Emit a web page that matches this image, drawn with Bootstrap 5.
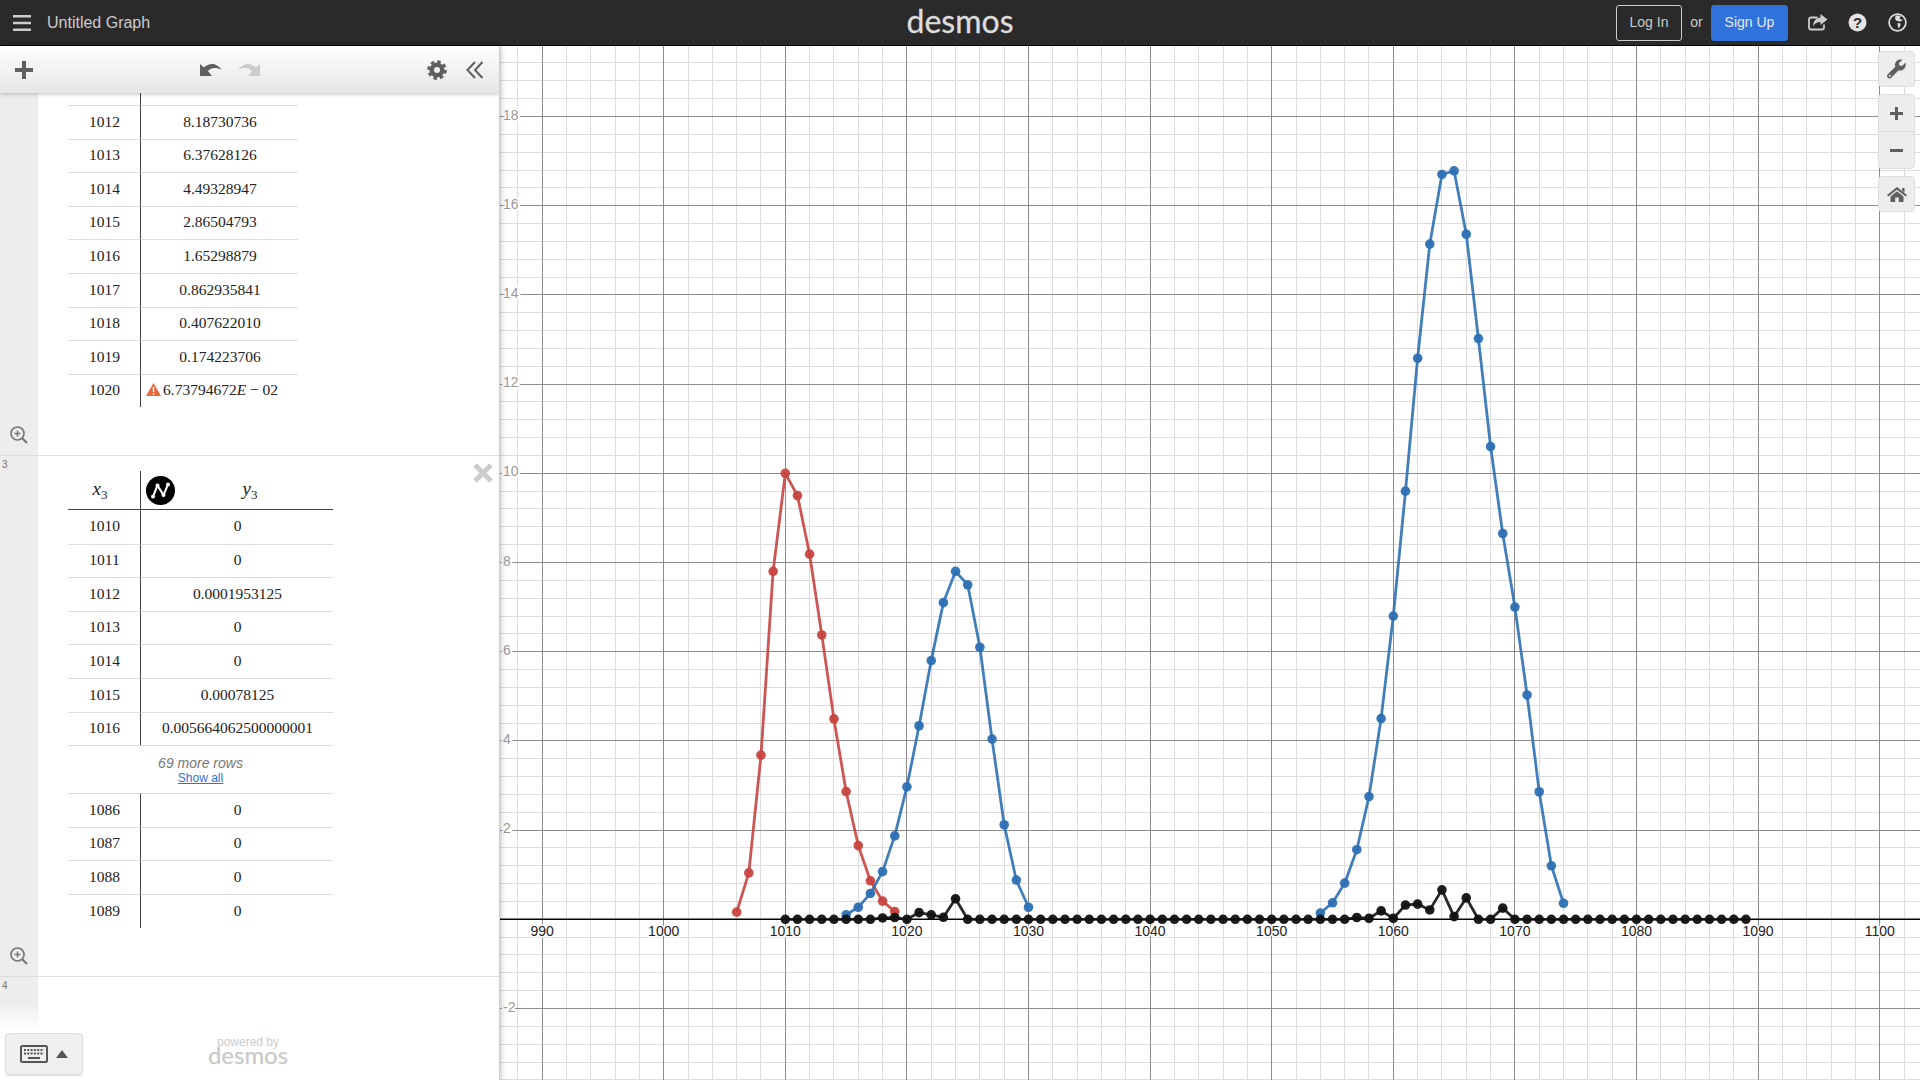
<!DOCTYPE html>
<html lang="en">
<head>
  <meta charset="UTF-8">
  <title>Untitled Graph</title>
  <link href="https://cdn.jsdelivr.net/npm/bootstrap@5.3.0/dist/css/bootstrap.min.css" rel="stylesheet">
  <style>
    html, body { height: 100%; overflow: hidden; }
    body { font-family: "Liberation Sans", Arial, sans-serif; background: #fff; }
    .topbar { height: 46px; background: #2a2a2a; border-bottom: 1px solid #000; color: #ccc; padding: 0 13px; }
    .top-side { flex: 1 1 0; }
    .graph-title { font-size: 16px; margin-left: 16px; color: #ccc; }
    .brand-word { font-family: Lato, sans-serif; font-size: 32px; line-height: 1; color: #ddd; margin-top: -3px; -webkit-text-stroke: .3px #ddd; }
    .btn-login, .btn-signup { font-size: 14px; height: 36px; padding: 0; display: flex; align-items: center; justify-content: center; border-radius: 3px; }
    .btn-login { width: 66px; color: #ccc; border: 1px solid #ccc; background: transparent; }
    .btn-signup { width: 77px; color: #e8e8e8; border: 1px solid #2f72dc; background: #2f72dc; }
    .or-word { font-size: 14px; width: 29px; text-align: center; }
    .share-slot { margin-left: 20px; width: 20px; }
    .help-slot { margin-left: 20px; width: 19px; }
    .globe-slot { margin-left: 21px; width: 19px; }
    .workspace { height: 1034px; }
    .left-panel { width: 500px; flex: none; border-right: 1px solid #ccc; box-shadow: 0 0 6px rgba(0,0,0,.35); z-index: 2; background: #fff; }
    .panel-head { height: 47px; background: linear-gradient(#fff, #e6e6e6); box-shadow: 0 1px 4px rgba(0,0,0,.25); z-index: 3; padding: 0 15px; }
    .head-right { gap: 19px; }
    .expr { border-top: 1px solid #ddd; }
    .expr-a { height: 362px; border-top: 0; }
    .expr-b { height: 521px; }
    .expr-c { height: 104px; }
    .gutter { width: 38px; flex: none; background: #ededed; color: #777; font-size: 10px; padding: 1px 0 0 2px; }
    .gutter-fade { background: linear-gradient(#ededed 25%, #fff 52%); }
    .zoom-slot { padding: 0 0 11px 8px; }
    .calc-tbl.table { width: 230px; margin: 0 0 0 30px; table-layout: fixed; border-collapse: separate; border-spacing: 0; font-family: "Liberation Serif", serif; font-size: 15.5px; color: #222; }
    .calc-tbl.wide-tbl { width: 265px; margin-top: 15px; }
    .calc-tbl.table > :not(caption) > * > * { padding: 0 0 2px 1px; height: 33.6px; border-bottom: 0; border-top: 1px solid #ddd; text-align: center; vertical-align: middle; box-shadow: none; background: transparent; }
    .calc-tbl.table > :not(caption) > * > .col-x { width: 73px; border-right: 1px solid #444; }
    .calc-tbl.table > :not(caption) > .stub-row > * { height: 12px; border-top: 0; padding: 0; }
    .calc-tbl.table > thead > tr > th { height: 39px; border-top: 0; border-bottom: 1px solid #444; font-weight: 400; font-size: 19px; position: relative; }
    .calc-tbl.table > thead > tr > th.x-head { padding-right: 9px; }
    .calc-tbl.table > thead > tr > th.y-head { padding-left: 26px; }
    .calc-tbl.table > tbody > tr.after-head > * { border-top: 0; }
    .calc-tbl.table > tbody > .more-row > td { height: 48px; font-family: "Liberation Sans", sans-serif; line-height: 1.1; padding: 0; }
    .calc-tbl.table > tbody > tr > td.warn-td { text-align: left; padding-left: 5px; }
    .calc-tbl sub { font-size: 13px; font-style: normal; bottom: -.35em; }
    .style-dot { position: absolute; left: 5px; top: 5px; }
    .warn-cell { display: inline-flex; align-items: center; gap: 2px; }
    .more-note { font-style: italic; font-size: 14px; color: #777; }
    .show-all { font-size: 12px; color: #2f72dc; display: block; }
    .close-x { right: 6px; top: 7px; }
    .kbd-btn { left: 5px; bottom: 5px; width: 78px; height: 42px; background: #efefef; border: 1px solid #ddd; border-radius: 4px; box-shadow: 0 1px 2px rgba(0,0,0,.12); z-index: 4; }
    .powered { left: 198px; bottom: 13px; width: 100px; text-align: center; color: #ccc; z-index: 4; }
    .powered-by { font-size: 12px; line-height: 12px; }
    .powered-word { font-family: Lato, sans-serif; font-size: 24px; line-height: 24px; margin-top: -5px; color: #c8c8c8; -webkit-text-stroke: .2px #c8c8c8; }
    .graph-pane { min-width: 0; }
    .graph-pane svg { display: block; }
    .graph-tools { top: 5px; right: 5px; gap: 7px; z-index: 1; }
    .tool-box { width: 37px; background: #ededed; border: 1px solid #ddd; border-radius: 4px; }
    .tool-cell { height: 34px; }
    .zoom-box .tool-cell { height: 36px; }
    .zoom-box .tool-cell + .tool-cell { border-top: 1px solid #ddd; height: 37px; }
    .x-label { font-family: "Liberation Sans", sans-serif; font-size: 14px; fill: #222; text-anchor: middle; paint-order: stroke; stroke: #fff; stroke-width: 3px; }
    .y-label { font-family: "Liberation Sans", sans-serif; font-size: 14px; fill: #999; paint-order: stroke; stroke: #fff; stroke-width: 4px; }
  </style>
</head>
<body class="d-flex flex-column">
  <header class="topbar d-flex align-items-center flex-none">
    <div class="top-side d-flex align-items-center">
      <svg width="18" height="16" viewBox="0 0 18 16"><path d="M0 1.2H18M0 8H18M0 14.8H18" stroke="#ccc" stroke-width="2.4"/></svg>
      <span class="graph-title">Untitled Graph</span>
    </div>
    <div class="brand-word">desmos</div>
    <div class="top-side d-flex align-items-center justify-content-end">
      <button class="btn btn-login">Log In</button>
      <span class="or-word">or</span>
      <button class="btn btn-signup">Sign Up</button>
      <div class="share-slot d-flex">
        <svg width="20" height="17" viewBox="0 0 20 17"><path d="M9.5 3.5H3Q1 3.500 1 5.500V13.500Q1 15.500 3 15.500H14Q16 15.500 16 13.500V10.500" fill="none" stroke="#ccc" stroke-width="1.8"/><path d="M12.500 0L19.500 5.500L12.500 11V8C8.500 8 6.500 9.500 5 12.500C5 7.500 8 3.500 12.500 3.500Z" fill="#ccc"/></svg>
      </div>
      <div class="help-slot d-flex">
        <svg width="19" height="19" viewBox="0 0 19 19"><circle cx="9.500" cy="9.500" r="9" fill="#e4e4e4"/><text x="9.500" y="15" text-anchor="middle" font-family="Liberation Sans" font-weight="700" font-size="15" fill="#2a2a2a">?</text></svg>
      </div>
      <div class="globe-slot d-flex">
        <svg width="19" height="19" viewBox="0 0 19 19"><circle cx="9.500" cy="9.500" r="8.400" fill="none" stroke="#ddd" stroke-width="1.700"/><path d="M7.500 3C9 2.300 11.500 2.500 13 3.500L11.500 5L12.500 6.500H14.500L14 8L11 8.500L8 7.500L7 5.500ZM9.500 10L12.500 10.500L12.300 13L10.500 15.500L9.800 13Z" fill="#ddd"/></svg>
      </div>
    </div>
  </header>

  <main class="workspace d-flex">
    <aside class="left-panel d-flex flex-column position-relative overflow-hidden">
      <div class="panel-head d-flex align-items-center justify-content-between position-relative">
        <svg width="18" height="18" viewBox="0 0 18 18"><path d="M9 0V18M0 9H18" stroke="#5f5f5f" stroke-width="4"/></svg>
        <div class="d-flex gap-3">
          <svg width="22" height="14" viewBox="0 0 22 14"><path d="M0 13V1L4 4.500C9 0 16 -1 22 7C16 4 11 4.500 8 8L12 13Z" fill="#5f5f5f"/></svg>
          <svg width="22" height="14" viewBox="0 0 22 14"><path d="M22 13V1L18 4.500C13 0 6 -1 0 7C6 4 11 4.500 14 8L10 13Z" fill="#ccc"/></svg>
        </div>
        <div class="head-right d-flex align-items-center">
          <svg width="20" height="20" viewBox="0 0 20 20"><circle cx="10" cy="10" r="5.300" fill="none" stroke="#5f5f5f" stroke-width="4.600"/><circle cx="10" cy="10" r="8.200" fill="none" stroke="#5f5f5f" stroke-width="3.200" stroke-dasharray="3.400 3.040"/></svg>
          <svg width="18" height="18" viewBox="0 0 18 18"><path d="M9 1L1.500 9L9 17M16.500 1L9 9L16.500 17" fill="none" stroke="#5f5f5f" stroke-width="2"/></svg>
        </div>
      </div>

      <section class="expr expr-a d-flex">
        <div class="gutter d-flex flex-column justify-content-end">
          <div class="zoom-slot"><svg width="18" height="18" viewBox="0 0 18 18"><circle cx="7.500" cy="7.500" r="6.500" fill="none" stroke="#777" stroke-width="1.700"/><path d="M12 12L17 17" stroke="#777" stroke-width="2.200"/><path d="M7.500 4.500V10.500M4.500 7.500H10.500" stroke="#777" stroke-width="1.500"/></svg></div>
        </div>
        <table class="table calc-tbl align-self-start">
          <tbody>
            <tr class="stub-row"><td class="col-x"></td><td></td></tr>
            <tr><td class="col-x">1012</td><td>8.18730736</td></tr>
            <tr><td class="col-x">1013</td><td>6.37628126</td></tr>
            <tr><td class="col-x">1014</td><td>4.49328947</td></tr>
            <tr><td class="col-x">1015</td><td>2.86504793</td></tr>
            <tr><td class="col-x">1016</td><td>1.65298879</td></tr>
            <tr><td class="col-x">1017</td><td>0.862935841</td></tr>
            <tr><td class="col-x">1018</td><td>0.407622010</td></tr>
            <tr><td class="col-x">1019</td><td>0.174223706</td></tr>
            <tr>
              <td class="col-x">1020</td>
              <td class="warn-td"><span class="warn-cell"><svg width="15" height="13" viewBox="0 0 15 13"><path d="M7.500 0L15 13H0Z" fill="#e8663a"/><path d="M7.500 4V9M7.500 10V11.800" stroke="#fff" stroke-width="1.500"/></svg><span>6.73794672<i>E</i> &minus; 02</span></span></td>
            </tr>
          </tbody>
        </table>
      </section>

      <section class="expr expr-b d-flex position-relative">
        <div class="gutter d-flex flex-column justify-content-between">
          <span>3</span>
          <div class="zoom-slot"><svg width="18" height="18" viewBox="0 0 18 18"><circle cx="7.500" cy="7.500" r="6.500" fill="none" stroke="#777" stroke-width="1.700"/><path d="M12 12L17 17" stroke="#777" stroke-width="2.200"/><path d="M7.500 4.500V10.500M4.500 7.500H10.500" stroke="#777" stroke-width="1.500"/></svg></div>
        </div>
        <table class="table calc-tbl wide-tbl align-self-start">
          <thead>
            <tr>
              <th class="col-x x-head"><i>x</i><sub>3</sub></th>
              <th class="y-head">
                <svg class="style-dot" width="29" height="29" viewBox="0 0 29 29"><circle cx="14.500" cy="14.500" r="14.500" fill="#000"/><path d="M7 20.500L11.500 9.500L17.500 19L22 8.500" fill="none" stroke="#fff" stroke-width="2"/><circle cx="7" cy="20.500" r="2" fill="#fff"/><circle cx="11.500" cy="9.500" r="2" fill="#fff"/><circle cx="17.500" cy="19" r="2" fill="#fff"/><circle cx="22" cy="8.500" r="2" fill="#fff"/></svg>
                <i>y</i><sub>3</sub>
              </th>
            </tr>
          </thead>
          <tbody>
            <tr class="after-head"><td class="col-x">1010</td><td>0</td></tr>
            <tr><td class="col-x">1011</td><td>0</td></tr>
            <tr><td class="col-x">1012</td><td>0.0001953125</td></tr>
            <tr><td class="col-x">1013</td><td>0</td></tr>
            <tr><td class="col-x">1014</td><td>0</td></tr>
            <tr><td class="col-x">1015</td><td>0.00078125</td></tr>
            <tr><td class="col-x">1016</td><td>0.005664062500000001</td></tr>
            <tr class="more-row"><td colspan="2"><span class="more-note">69 more rows</span><a class="show-all" href="#">Show all</a></td></tr>
            <tr><td class="col-x">1086</td><td>0</td></tr>
            <tr><td class="col-x">1087</td><td>0</td></tr>
            <tr><td class="col-x">1088</td><td>0</td></tr>
            <tr><td class="col-x">1089</td><td>0</td></tr>
          </tbody>
        </table>
        <svg class="close-x position-absolute" width="20" height="20" viewBox="0 0 20 20"><path d="M2 2L18 18M18 2L2 18" stroke="#ccc" stroke-width="5"/></svg>
      </section>

      <section class="expr expr-c d-flex">
        <div class="gutter gutter-fade"><span>4</span></div>
      </section>

      <div class="kbd-btn position-absolute d-flex align-items-center justify-content-center gap-2">
        <svg width="28" height="18" viewBox="0 0 28 18"><rect x="1" y="1" width="26" height="16" rx="1.500" fill="none" stroke="#555" stroke-width="2"/><path d="M4 5H24M4 8.500H24" stroke="#555" stroke-width="2" stroke-dasharray="2 1.300"/><path d="M8 13H20" stroke="#555" stroke-width="2"/></svg>
        <svg width="12" height="8" viewBox="0 0 12 8"><path d="M6 0L12 8H0Z" fill="#555"/></svg>
      </div>
      <div class="powered position-absolute">
        <div class="powered-by">powered by</div>
        <div class="powered-word">desmos</div>
      </div>
    </aside>

    <div class="graph-pane flex-grow-1 position-relative overflow-hidden">
      <svg id="plot" width="1420" height="1034" viewBox="500 46 1420 1034"></svg>
      <div class="graph-tools position-absolute d-flex flex-column">
        <div class="tool-box">
          <div class="tool-cell d-flex align-items-center justify-content-center">
            <svg width="20" height="20" viewBox="0 0 20 20"><path d="M18.500 3.500L15 7L12.500 6.500L12 4L15.500 .8C12 -.3 8.500 1.500 8 5C7.900 6 8 7 8.300 7.800L1 15C-.2 16.200 -.2 17.700 .8 18.700C1.800 19.700 3.300 19.700 4.500 18.500L11.700 11.300C16 12.500 19.800 8.500 18.500 3.500Z" fill="#5f5f5f"/><circle cx="2.800" cy="16.800" r="1" fill="#ededed"/></svg>
          </div>
        </div>
        <div class="tool-box zoom-box">
          <div class="tool-cell d-flex align-items-center justify-content-center">
            <svg width="13" height="13" viewBox="0 0 13 13"><path d="M6.500 0V13M0 6.500H13" stroke="#5f5f5f" stroke-width="3"/></svg>
          </div>
          <div class="tool-cell d-flex align-items-center justify-content-center">
            <svg width="13" height="3" viewBox="0 0 13 3"><path d="M0 1.500H13" stroke="#5f5f5f" stroke-width="3"/></svg>
          </div>
        </div>
        <div class="tool-box">
          <div class="tool-cell d-flex align-items-center justify-content-center">
            <svg width="20" height="15" viewBox="0 0 20 15"><path d="M10 0L20 8L18.700 9.500L10 2.700L1.300 9.500L0 8Z" fill="#5f5f5f"/><path d="M15 1H17.500V5.500L15 3.500Z" fill="#5f5f5f"/><path d="M3.500 9.500L10 4.300L16.500 9.500V15H11.800V10.500H8.200V15H3.500Z" fill="#5f5f5f"/></svg>
          </div>
        </div>
      </div>
    </div>
  </main>

  <script src="https://cdn.jsdelivr.net/npm/bootstrap@5.3.0/dist/js/bootstrap.bundle.min.js"></script>
  <script>
    const plot = document.getElementById('plot');
    const NS = 'http://www.w3.org/2000/svg';
    const px = v => 785.3 + (v - 1010) * 12.16;
    const py = v => 919.3 - v * 44.6;

    function add(tag, attrs, text) {
      const el = document.createElementNS(NS, tag);
      for (const k in attrs) el.setAttribute(k, attrs[k]);
      if (text !== undefined) el.textContent = text;
      plot.appendChild(el);
      return el;
    }
    function vline(x, color) {
      const s = Math.floor(x) + .5;
      add('line', { x1: s, x2: s, y1: 46, y2: 1080, stroke: color });
    }
    function hline(y, color) {
      const s = Math.floor(y) + .5;
      add('line', { x1: 500, x2: 1920, y1: s, y2: s, stroke: color });
    }

    // minor grid first, majors on top
    for (let v = 970; v <= 1110; v += 2) if (v % 10) vline(px(v), '#dcdcdc');
    for (let i = -10; i <= 50; i++) if (i % 5) hline(py(i * .4), '#dcdcdc');
    for (let v = 970; v <= 1110; v += 10) vline(px(v), '#8c8c8c');
    for (let i = -2; i <= 10; i++) if (i) hline(py(i * 2), '#8c8c8c');
    add('line', { x1: 500, x2: 1920, y1: 919.3, y2: 919.3, stroke: '#000', 'stroke-width': 1.6 });

    for (let v = 990; v <= 1100; v += 10) add('text', { x: px(v), y: 936, class: 'x-label' }, v);
    for (let v = 18; v >= -2; v -= 2) {
      if (v) add('text', { x: 503, y: py(v) + 3, class: 'y-label' }, v < 0 ? '-' + (-v) : v);
    }

    const red = [.16, 1.04, 3.68, 7.8, 10, 9.5, 8.187, 6.376, 4.493, 2.865, 1.653, .863, .408, .174];
    const blueA = [.1, .27, .58, 1.07, 1.87, 2.97, 4.34, 5.8, 7.1, 7.8, 7.5, 6.1, 4.04, 2.12, .88, .27];
    const blueB = [.14, .37, .81, 1.56, 2.75, 4.5, 6.8, 9.6, 12.58, 15.14, 16.7, 16.78, 15.36, 13.02, 10.6, 8.65, 7, 5.03, 2.86, 1.2, .36];
    const bumps = { 1018: .03, 1019: .04, 1021: .15, 1022: .1, 1023: .045, 1024: .46, 1057: .04, 1058: .02, 1059: .19, 1060: .02, 1061: .32, 1062: .34, 1063: .21, 1064: .66, 1065: .06, 1066: .48, 1069: .25 };
    const black = [];
    for (let v = 1010; v <= 1089; v++) black.push(bumps[v] || 0);

    function series(start, values, color) {
      const pts = values.map((y, i) => px(start + i).toFixed(1) + ',' + py(y).toFixed(1));
      add('polyline', { points: pts.join(' '), fill: 'none', stroke: color, 'stroke-width': 2.8, 'stroke-opacity': .9, 'stroke-linejoin': 'round' });
      values.forEach((y, i) => add('circle', { cx: px(start + i), cy: py(y), r: 4.8, fill: color, 'fill-opacity': .95 }));
    }
    series(1006, red, '#c74440');
    series(1015, blueA, '#2d70b3');
    series(1054, blueB, '#2d70b3');
    series(1010, black, '#111');
  </script>
</body>
</html>
